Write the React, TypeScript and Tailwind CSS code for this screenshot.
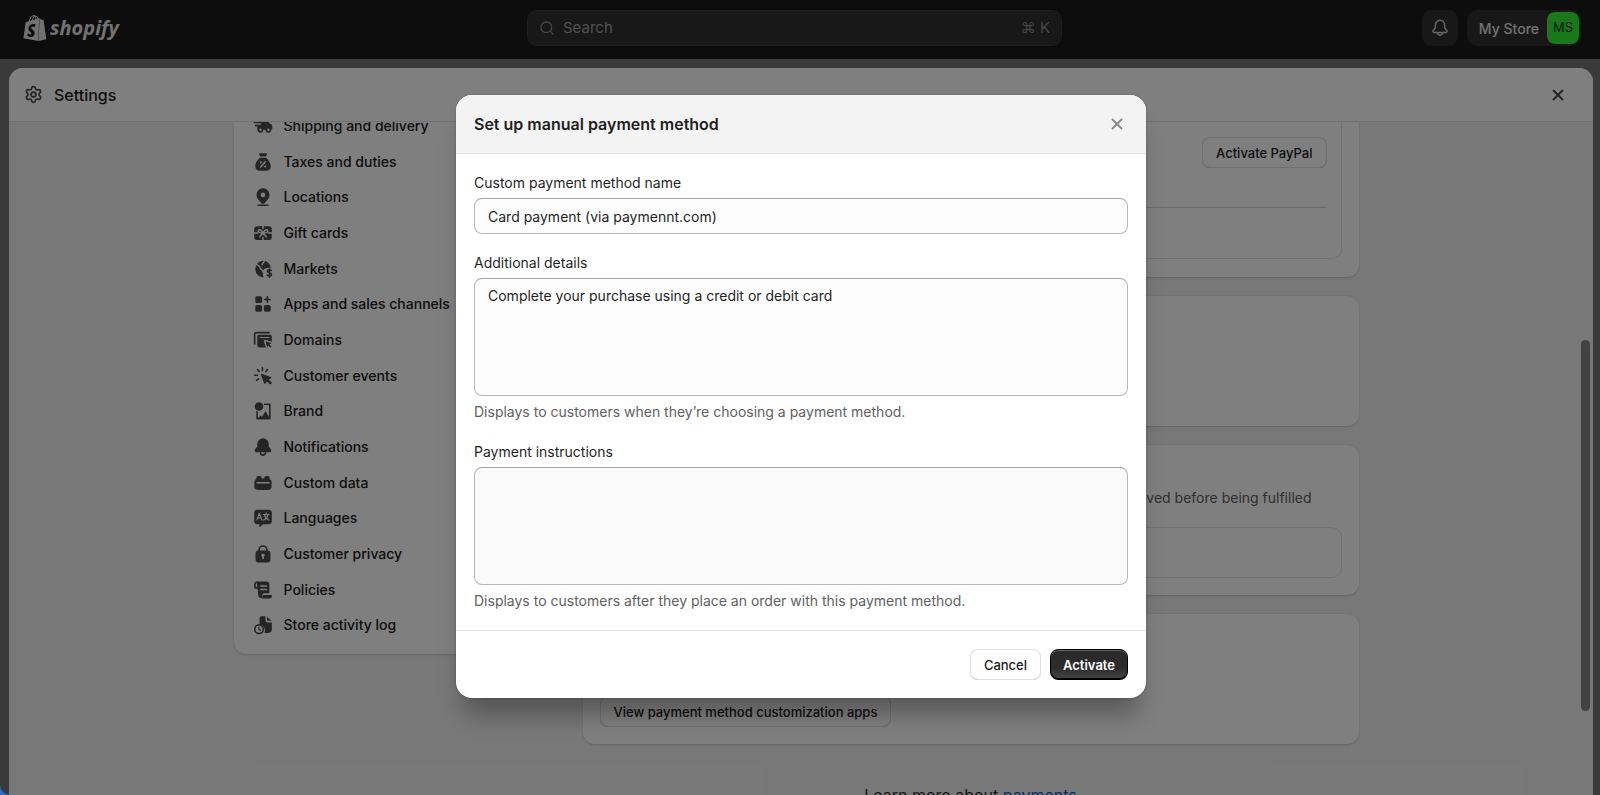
import type { ReactNode } from "react";
import { Search, Settings, X } from "lucide-react";
import { SiShopify } from "react-icons/si";

function Glyph({ children }: { children: ReactNode }) {
  return (
    <svg viewBox="0 0 20 20" className="size-[22px] shrink-0 fill-[#4a4a4a]" aria-hidden="true">
      {children}
    </svg>
  );
}

const line = {
  fill: "none",
  stroke: "#4a4a4a",
  strokeWidth: 1.5,
  strokeLinecap: "round",
  strokeLinejoin: "round",
} as const;
const cut = {
  fill: "none",
  stroke: "#fff",
  strokeWidth: 1.3,
  strokeLinecap: "round",
  strokeLinejoin: "round",
} as const;

const items: { label: string; icon: ReactNode }[] = [
  {
    label: "Shipping and delivery",
    icon: (
      <>
        <path d="M2.200 6.800h6M3.200 9.600h4" {...line} />
        <path d="M8 6.400A1.900 1.900 0 0 1 9.900 4.500h3.300c.6 0 1.100.3 1.400.8l1.300 2.400 1.300.4c.8.3 1.300 1 1.300 1.800v2.100c0 .8-.6 1.400-1.400 1.400H6.200c-.8 0-1.400-.6-1.400-1.400V10.500l3.200-1z" />
        <circle cx="7.600" cy="13.400" r="1.900" fill="#fff" stroke="#4a4a4a" strokeWidth="1.500" />
        <circle cx="14.800" cy="13.400" r="1.900" fill="#fff" stroke="#4a4a4a" strokeWidth="1.500" />
      </>
    ),
  },
  {
    label: "Taxes and duties",
    icon: (
      <>
        <path d="M7.200 2h5.600c.6 0 1 .6.7 1.100L12.600 5H7.400L6.500 3.100C6.200 2.600 6.600 2 7.200 2z" />
        <path d="M7.300 6.200h5.400c2.400 1.800 4.300 4.800 4.300 7.600 0 2.600-1.700 4.200-4.200 4.200H7.200C4.700 18 3 16.400 3 13.800c0-2.800 1.900-5.800 4.300-7.600z" />
        <path d="M12.200 9.800l-4.400 4.800" {...cut} />
        <circle cx="8" cy="10.300" r="1" fill="#fff" />
        <circle cx="12" cy="14.100" r="1" fill="#fff" />
      </>
    ),
  },
  {
    label: "Locations",
    icon: (
      <>
        <path
          fillRule="evenodd"
          d="M10 2a6 6 0 0 0-6 6c0 3 2.300 5 4 6.900.9 1 1.200 1.300 2 1.300s1.100-.3 2-1.300c1.700-1.900 4-3.900 4-6.900a6 6 0 0 0-6-6zm0 4a2.100 2.100 0 1 1 0 4.200A2.100 2.100 0 0 1 10 6z"
        />
        <path d="M5.500 17.500h9" {...line} />
      </>
    ),
  },
  {
    label: "Gift cards",
    icon: (
      <>
        <rect x="2" y="3.800" width="16" height="12.600" rx="2.800" />
        <path d="M2 10h3M15 10h3" {...cut} />
        <path
          d="M10 10C8.500 6.500 5.600 6.300 5.600 8.200 5.600 9.600 7.500 10 10 10c2.500 0 4.400-.4 4.400-1.800C14.400 6.300 11.500 6.500 10 10zM10 10l-3 3.400M10 10l3 3.400"
          {...cut}
        />
        <path d="M10 3.600v2.200M10 14.200v2.400" {...cut} />
      </>
    ),
  },
  {
    label: "Markets",
    icon: (
      <>
        <path d="M10 2.500a7.500 7.500 0 1 0 .9 15c-.9-.8-1.200-1.900-.8-2.900-.9-1.200-.7-2.900.4-4 1.300-1.400 3.600-1.900 6.700-1.700A7.500 7.500 0 0 0 10 2.500z" />
        <path d="M4 5.800c1.600 1.200 3.400 1 3.600 3.400.1 1.500 2 1.300 2.200 2.900M11 3.200c-.4 1.700-2.200 1.500-1.800 3" {...cut} />
        <path d="M17.600 11.300c-.6-.7-3.600-1-3.600.8 0 1.700 3.700.9 3.700 2.800 0 1.800-3 1.700-3.900.6M15.800 10v7.500" {...line} />
      </>
    ),
  },
  {
    label: "Apps and sales channels",
    icon: (
      <>
        <rect x="3" y="3" width="6.200" height="6.200" rx="1.500" />
        <rect x="3" y="10.800" width="6.200" height="6.200" rx="1.500" />
        <rect x="10.800" y="10.800" width="6.200" height="6.200" rx="1.500" />
        <path d="M14 3.400v5M11.500 5.900h5" {...line} />
      </>
    ),
  },
  {
    label: "Domains",
    icon: (
      <>
        <path d="M2.400 13.600V5c0-1 .6-1.700 1.700-1.700h11.400" {...line} />
        <path
          fillRule="evenodd"
          d="M6.500 5.200h9.800c1 0 1.700.7 1.700 1.700v4.600l-5.700-1.700c-1-.3-1.800.5-1.500 1.500l1.800 5.500H6.500c-1 0-1.700-.7-1.700-1.700V6.900c0-1 .7-1.700 1.700-1.700zM7 7.200v1h9v-1z"
        />
        <path d="M12.400 11.200l5.400 1.700-2 1.100 2 2-1 1-2-2-1.100 2z" />
      </>
    ),
  },
  {
    label: "Customer events",
    icon: (
      <>
        <path d="M9.500 2.500v2.400M5 4.200l1.500 1.700M14 4.200l-1.400 1.700M2.500 9.300h2.400M4.200 14l1.700-1.400" {...line} />
        <path d="M9.200 8.100l7.800 2.700c.8.300.8 1.100.1 1.500l-1.800.9 2.500 2.500c.8.800-.9 2.500-1.700 1.700l-2.600-2.500-1 1.800c-.4.7-1.200.6-1.500-.1L8.200 9.200c-.3-.7.300-1.300 1-1.100z" />
      </>
    ),
  },
  {
    label: "Brand",
    icon: (
      <>
        <circle cx="6.400" cy="5.900" r="3.900" />
        <path d="M11.500 3.900h4.700v12.900H4.600v-6" {...line} />
        <path d="M4.500 17.500l3.300-3.400 1.300 1.200 2.700-4.500c.3-.4.8-.4 1 0l3.900 6.700z" />
      </>
    ),
  },
  {
    label: "Notifications",
    icon: (
      <>
        <path d="M10 2a5.200 5.200 0 0 0-5.200 5.200v2.300l-2 2.600c-.8 1.200-.2 2.700 1.200 2.700h12c1.400 0 2-1.500 1.200-2.700l-2-2.600V7.200A5.200 5.200 0 0 0 10 2z" />
        <path d="M7.800 15.200a2.200 2.200 0 0 0 4.400 0" {...line} />
      </>
    ),
  },
  {
    label: "Custom data",
    icon: (
      <>
        <path d="M4 6.400V5.200C4 4.300 4.700 3.600 5.600 3.600h1.600c.9 0 1.600.7 1.600 1.600v.7h2.400v-.7c0-.9.7-1.600 1.600-1.600h1.600c.9 0 1.600.7 1.600 1.600v1.200c1.200.5 1.800 1.400 1.800 2.700v4.400c0 1.700-1.100 2.800-2.800 2.800H5c-1.700 0-2.800-1.100-2.800-2.800V9.100C2.200 7.800 2.800 6.900 4 6.400z" />
        <path d="M4.500 9.800h11" {...cut} />
      </>
    ),
  },
  {
    label: "Languages",
    icon: (
      <>
        <path d="M4.700 2.500h10.600c1.600 0 2.700 1.100 2.700 2.700v7.700c0 1.600-1.100 2.700-2.700 2.700H10L7.600 18c-.5.4-.9.200-.9-.4v-2h-2C3.100 15.600 2 14.500 2 12.900V5.200c0-1.600 1.100-2.700 2.700-2.700z" />
        <path
          d="M4.500 11.700l2.200-6 2.200 6M5.200 10h3M10.300 6.800h5.200M12.900 5.300v1.500M14.600 6.900c-.6 2.300-2 4-4.100 5M11.200 7c.6 2.200 2 3.900 4.100 4.900"
          {...cut}
          strokeWidth="1.100"
        />
      </>
    ),
  },
  {
    label: "Customer privacy",
    icon: (
      <>
        <path d="M6.500 7.500V6.200a3.500 3.500 0 0 1 7 0v1.300" {...line} />
        <path
          fillRule="evenodd"
          d="M5.800 6.900h8.400c1.600 0 2.600 1 2.600 2.600v5.200c0 1.900-1.200 3.100-3.100 3.100H6.300c-1.900 0-3.100-1.200-3.100-3.100V9.500c0-1.600 1-2.600 2.600-2.600zM10 9.700a1.500 1.500 0 0 0-.8 2.800v1.600c0 1 1.600 1 1.600 0v-1.600A1.500 1.500 0 0 0 10 9.700z"
        />
      </>
    ),
  },
  {
    label: "Policies",
    icon: (
      <>
        <path d="M2.700 8V4.700a1.600 1.600 0 0 1 3.200 0V8z" {...line} />
        <path d="M4.300 2.300h8.900c1.600 0 2.600 1 2.600 2.600v8H11c-1 0-1.600.8-1.600 1.900v.8c0 .9-.6 1.600-1.500 1.600s-2.200-.7-2.200-2.200z" />
        <path d="M8 6.300h5.200M8 9.600h5.200" {...cut} />
        <path d="M10.800 14.500h6.500c.7 0 1 .4.900 1-.2 1.300-1.100 2.200-2.500 2.200H8c1.300-.4 1.700-1.100 1.800-2.200.1-.6.400-1 1-1z" />
      </>
    ),
  },
  {
    label: "Store activity log",
    icon: (
      <>
        <path d="M8.500 2h3.800v3.700c0 1.100.9 2 2 2H18v6.500c0 1.900-1.200 3-3 3h-3.600a5.600 5.600 0 0 0-4.500-7.800V4c0-1.200.6-2 1.600-2z" />
        <path d="M13.700 2.500l3.900 3.700h-3c-.5 0-.9-.4-.9-.9z" />
        <circle cx="6.400" cy="13.800" r="3.900" {...line} />
        <path d="M6.300 12v2l1.300.8" {...line} strokeWidth="1.200" />
      </>
    ),
  },
];

const surface =
  "rounded-[12px] bg-white shadow-[0_1px_0_#d0d0d0,0_0_0_1px_#e6e6e6,0_2px_2px_#e0e0e0]";
const plainButton =
  "h-[31px] rounded-[8px] bg-white px-[14px] text-[13px] leading-[20px] font-medium text-[#1a1a1a] shadow-[0_0_0_1px_#e0e0e0_inset,0_-1px_0_#b5b5b5_inset]";
const field =
  "block w-full resize-none rounded-[8px] border border-[#b8b8b8] border-t-[#a3a3a3] px-[13px] text-[14px] leading-[20px] text-[#1f1f1f] outline-none";

function TopBar() {
  return (
    <header className="flex h-[59px] shrink-0 items-start bg-[#1a1a1a] pt-[10px] pr-[19px] pl-[8px]">
      <div className="flex flex-1">
        <a href="#home" className="ml-[14px] flex h-[36px] items-center gap-[2px] text-[#e3e3e3]">
          <SiShopify className="size-[26px]" aria-hidden="true" />
          <span className="font-['Open_Sans',sans-serif] text-[20px] leading-none font-bold italic">shopify</span>
        </a>
      </div>
      <label className="flex h-[36px] w-[535px] items-center gap-[8px] rounded-[10px] border border-[#3d3d3d] bg-[#303030] px-[11px] text-[#8a8a8a]">
        <Search size={16} strokeWidth={2} aria-hidden="true" />
        <input
          type="text"
          aria-label="Search"
          placeholder="Search"
          className="min-w-0 flex-1 bg-transparent text-[15px] leading-[20px] outline-none placeholder:text-[#a0a0a0]"
        />
        <span className="text-[15px] leading-[20px] text-[#8a8a8a]">⌘ K</span>
      </label>
      <div className="flex flex-1 justify-end gap-[9px]">
        <button
          type="button"
          aria-label="Notifications"
          className="flex size-[36px] items-center justify-center rounded-[10px] bg-[#303030]"
        >
          <svg
            viewBox="0 0 20 20"
            className="size-[20px]"
            fill="none"
            stroke="#d0d0d0"
            strokeWidth="1.500"
            strokeLinejoin="round"
          >
            <path d="M10 2.300A4.700 4.700 0 0 0 5.300 7v2.600c0 .4-.1.700-.4 1l-1.500 1.600c-1 1.100-.4 2.300.9 2.300h11.400c1.300 0 1.900-1.200.9-2.300l-1.500-1.600c-.3-.3-.4-.6-.4-1V7A4.700 4.700 0 0 0 10 2.300z" />
            <path d="M7.700 14.800a2.300 2.300 0 0 0 4.600 0" />
          </svg>
        </button>
        <button
          type="button"
          className="flex h-[36px] items-center gap-[8px] rounded-[10px] bg-[#303030] pr-[2px] pl-[12px] text-[14px] font-medium text-[#e3e3e3]"
        >
          My Store
          <span className="flex size-[32px] items-center justify-center rounded-[8px] bg-[#34ef34] text-[13px] font-normal text-[#0f3d0f]">
            MS
          </span>
        </button>
      </div>
    </header>
  );
}

function Sidebar() {
  return (
    <nav className={`${surface} w-[330px] shrink-0 self-start pb-[11px]`}>
      <ul className="flex h-[535px] flex-col">
        {items.map((item) => (
          <li key={item.label} className="flex flex-1 items-center">
            <a
              href="#settings"
              className="flex items-center gap-[10px] pl-[18px] text-[14px] leading-[20px] font-medium text-[#1a1a1a]"
            >
              <Glyph>{item.icon}</Glyph>
              {item.label}
            </a>
          </li>
        ))}
      </ul>
    </nav>
  );
}

function Payments() {
  return (
    <main className="flex min-w-0 flex-1 flex-col gap-[19px] pt-px">
      <section className={`${surface} h-[168px] px-[17px] pb-[18px]`}>
        <div className="h-full rounded-b-[10px] border border-t-0 border-[#e3e3e3] px-[14px] pt-[28px]">
          <div className="flex h-[71px] items-start justify-end border-b border-[#d8d8d8]">
            <button type="button" className={plainButton}>
              Activate PayPal
            </button>
          </div>
        </div>
      </section>
      <section className={`${surface} h-[130px]`} />
      <section className={`${surface} px-[17px] pt-[43px] pb-[17px]`}>
        <p className="pr-[30px] text-right text-[14px] leading-[20px] text-[#616161]">approved before being fulfilled</p>
        <div className="mt-[19px] h-[51px] rounded-[10px] border border-[#e3e3e3]" />
      </section>
      <section className={`${surface} flex h-[130px] items-end px-[17px] pb-[17px]`}>
        <button type="button" className={plainButton}>
          View payment method customization apps
        </button>
      </section>
      <p className="mt-[22px] text-center text-[16px] leading-[20px] text-[#303030]">
        Learn more about{" "}
        <a href="#payments" className="text-[#005bd3] underline">
          payments
        </a>
      </p>
    </main>
  );
}

function Dialog() {
  return (
    <div
      role="dialog"
      aria-modal="true"
      aria-labelledby="dialog-title"
      className="w-[690px] overflow-hidden rounded-[16px] bg-white shadow-[0_24px_24px_-8px_rgba(0,0,0,0.3),0_0_3px_rgba(0,0,0,0.2)]"
    >
      <header className="flex items-center justify-between border-b border-[#e3e3e3] bg-[#f3f3f3] py-[18px] pr-[20px] pl-[18px]">
        <h2 id="dialog-title" className="text-[16px] leading-[22px] font-semibold text-[#1f1f1f]">
          Set up manual payment method
        </h2>
        <button type="button" aria-label="Close" className="text-[#8a8a8a]">
          <X size={18} strokeWidth={2.5} />
        </button>
      </header>
      <form className="text-[14px] leading-[20px] text-[#1f1f1f]">
        <div className="px-[18px] py-[19px]">
          <label htmlFor="method-name" className="mb-[5px] block">
            Custom payment method name
          </label>
          <input
            id="method-name"
            type="text"
            defaultValue="Card payment (via paymennt.com)"
            className={`${field} h-[36px] bg-[#fdfdfd]`}
          />
          <label htmlFor="details" className="mt-[19px] mb-[5px] block">
            Additional details
          </label>
          <textarea
            id="details"
            defaultValue="Complete your purchase using a credit or debit card"
            className={`${field} h-[118px] bg-[#fdfdfd] py-[7px]`}
          />
          <p className="mt-[6px] text-[#616161]">Displays to customers when they’re choosing a payment method.</p>
          <label htmlFor="instructions" className="mt-[20px] mb-[5px] block">
            Payment instructions
          </label>
          <textarea id="instructions" className={`${field} h-[118px] bg-[#fafafa] py-[7px]`} />
          <p className="mt-[6px] text-[#616161]">
            Displays to customers after they place an order with this payment method.
          </p>
        </div>
        <footer className="flex justify-end gap-[9px] border-t border-[#e3e3e3] p-[18px]">
          <button type="button" className={plainButton}>
            Cancel
          </button>
          <button
            type="button"
            className="h-[31px] rounded-[8px] border border-black bg-linear-to-b from-[#2b2b2b] from-60% to-[#454545] px-[12px] text-[13px] leading-[20px] font-semibold text-white shadow-[0_1px_0_#666_inset,0_-1px_0_#000_inset]"
          >
            Activate
          </button>
        </footer>
      </form>
    </div>
  );
}

export default function App() {
  return (
    <div className="h-screen overflow-hidden bg-[#2b6fc0] font-[Inter,sans-serif]">
      <div className="relative flex h-full flex-col overflow-hidden rounded-bl-[10px] bg-[#747474]">
        <TopBar />
        <div className="flex min-h-0 flex-1 flex-col pt-[9px] pr-[7px] pl-[9px]">
          <div className="relative flex min-h-0 flex-1 flex-col overflow-hidden rounded-t-[14px] bg-[#f1f1f1]">
            <div className="flex h-[54px] shrink-0 items-center border-b border-[#e3e3e3] bg-white pr-[26px] pl-[15px]">
              <Settings size={19} strokeWidth={2.2} color="#4a4a4a" aria-hidden="true" />
              <h1 className="ml-[11px] flex-1 text-[16px] leading-[22px] font-medium text-[#1a1a1a]">Settings</h1>
              <button type="button" aria-label="Close settings" className="text-[#4a4a4a]">
                <X size={18} strokeWidth={2.5} />
              </button>
            </div>
            <div className="min-h-0 flex-1 overflow-hidden pr-[10px]">
              <div className="mx-auto -mt-[14px] flex max-w-[1125px] gap-[19px]">
                <Sidebar />
                <Payments />
              </div>
            </div>
            <div className="absolute top-[272px] right-[3px] h-[371px] w-[9px] rounded-full bg-[#868686]" />
          </div>
        </div>
        <div className="absolute inset-0 flex items-center justify-center bg-black/50 pb-[2px] pl-[2px]">
          <Dialog />
        </div>
      </div>
    </div>
  );
}
